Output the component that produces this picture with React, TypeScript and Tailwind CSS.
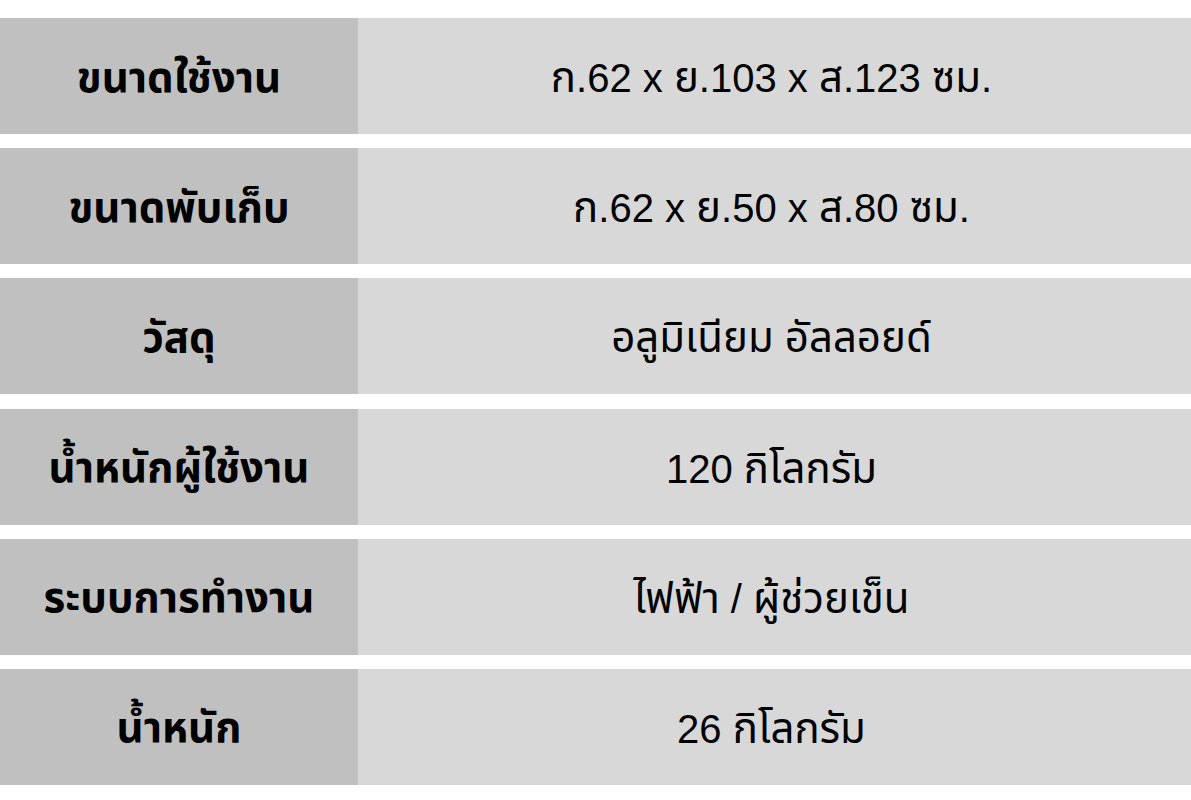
const rows: [string, string][] = [
  ['ขนาดใช้งาน', 'ก.62 x ย.103 x ส.123 ซม.'],
  ['ขนาดพับเก็บ', 'ก.62 x ย.50 x ส.80 ซม.'],
  ['วัสดุ', 'อลูมิเนียม อัลลอยด์'],
  ['น้ำหนักผู้ใช้งาน', '120 กิโลกรัม'],
  ['ระบบการทำงาน', 'ไฟฟ้า / ผู้ช่วยเข็น'],
  ['น้ำหนัก', '26 กิโลกรัม'],
];

// Thai runs get a bigger size so they sit level with the Latin digits
function Mixed({ text }: { text: string }) {
  const parts = text.split(/([\u0E00-\u0E7F]+)/).filter(Boolean);
  return (
    <span className="whitespace-pre">
      {parts.map((p, i) =>
        /[\u0E00-\u0E7F]/.test(p) ? (
          <span key={i} className="text-[42px]" style={{ fontFamily: '"Noto Sans Thai", "Noto Sans", sans-serif' }}>
            {p}
          </span>
        ) : (
          <span key={i}>{p}</span>
        )
      )}
    </span>
  );
}

export default function App() {
  return (
    <div
      className="w-[1191px] h-[800px] bg-white pt-[18px] flex flex-col gap-[14.2px] overflow-hidden text-black"
      style={{ fontFamily: '"Liberation Sans", "Noto Sans Thai", Arial, sans-serif' }}
    >
      {rows.map(([label, value]) => (
        <div key={label} className="flex h-[116px] shrink-0">
          <div
            className="w-[358px] bg-[#c0c0c0] flex items-center justify-center text-[42px] font-bold pt-[6px]"
            style={{ fontFamily: '"Noto Sans Thai", "Noto Sans", sans-serif' }}
          >
            {label}
          </div>
          <div className="flex-1 bg-[#d8d8d8] flex items-center justify-center text-[40px] leading-none pr-[6px] pt-[6px]">
            <Mixed text={value} />
          </div>
        </div>
      ))}
    </div>
  );
}
